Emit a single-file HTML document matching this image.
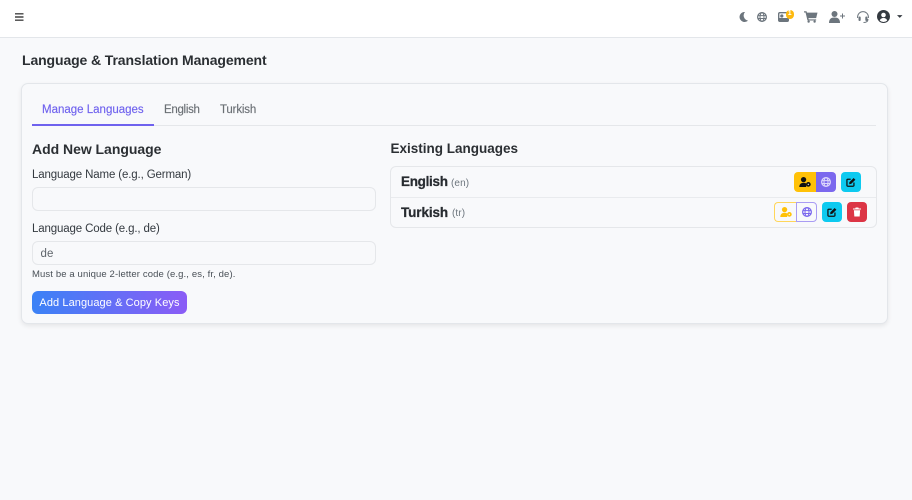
<!DOCTYPE html>
<html lang="en"><head><meta charset="utf-8"><title>Language & Translation Management</title>
<style>
*{box-sizing:border-box}
html,body{margin:0;padding:0;width:912px;height:500px;overflow:hidden;background:#f8f9fb;font-family:"Liberation Sans",sans-serif;color:#212529}
.a{position:absolute;white-space:nowrap}
svg{position:absolute;display:block}
.btn{position:absolute;width:20px;height:20px}
</style></head><body>
<svg width="0" height="0" style="position:absolute"><defs>
<symbol id="globe" viewBox="0 0 16 16"><circle cx="8" cy="8" r="7" fill="none" stroke="currentColor" stroke-width="2"/><ellipse cx="8" cy="8" rx="3.200" ry="7" fill="none" stroke="currentColor" stroke-width="1.600"/><path d="M1 5.700h14M1 10.300h14" stroke="currentColor" stroke-width="1.600"/></symbol>
<symbol id="usercog" viewBox="0 0 16 14"><circle cx="6" cy="3.700" r="3.700" fill="currentColor"/><path d="M0 14c0-4 2.300-5.800 6-5.800 1.500 0 2.700.3 3.700.9V14z" fill="currentColor"/><circle cx="12.700" cy="10.300" r="3.300" fill="currentColor"/><circle cx="12.700" cy="10.300" r="1.100" fill="#fff" opacity=".75"/></symbol>
<symbol id="edit" viewBox="0 0 16 16"><path d="M12.700 8.700V13.500a1.200 1.200 0 0 1-1.200 1.200H2.700a1.200 1.200 0 0 1-1.200-1.200V4.700a1.200 1.200 0 0 1 1.200-1.200H7.500" fill="none" stroke="currentColor" stroke-width="2"/><path d="M5.500 8.200L12.200 1.500l2.800 2.800-6.700 6.700-3.300.5z" fill="currentColor"/></symbol>
</defs></svg>

<div class="a" style="left:0;top:0;width:912px;height:38px;background:#fff;border-bottom:1px solid #e3e6ea"></div>
<svg style="left:15px;top:12.500px" width="8.500" height="8" viewBox="0 0 8.500 8"><path d="M0 .8h8.500M0 4h8.500M0 7.200h8.500" stroke="#444" stroke-width="1.400"/></svg>

<svg style="left:738.500px;top:12px" width="9" height="10" viewBox="0 0 9 10"><path d="M6 0A5 5 0 1 0 9 8.600 5.200 5.200 0 0 1 6 0z" fill="#6c757d"/></svg>
<svg style="left:757px;top:12px;color:#6c757d" width="10" height="10"><use href="#globe"/></svg>
<svg style="left:778px;top:12px" width="11" height="10" viewBox="0 0 11 10"><rect x=".7" y=".7" width="9.600" height="8.600" rx="1" fill="none" stroke="#6c757d" stroke-width="1.400"/><rect x="1" y="6" width="9" height="3" fill="#6c757d"/><circle cx="3.800" cy="4" r="1.600" fill="#6c757d"/></svg>
<div class="a" style="left:785.500px;top:10px;width:8.500px;height:8.500px;border-radius:50%;background:#fdb90e;color:#fff;font-size:7px;line-height:8.500px;font-weight:700;text-align:center">1</div>
<svg style="left:804px;top:11px" width="13.500" height="12" viewBox="0 0 14 12"><path d="M0 0h2.600l.5 1.500H14l-1.400 5.700H4.600l.3 1.200h7.700v1.200H3.600L1.600 1.300H0z" fill="#6c757d"/><circle cx="4.800" cy="10.800" r="1.200" fill="#6c757d"/><circle cx="11" cy="10.800" r="1.200" fill="#6c757d"/></svg>
<svg style="left:829px;top:11px" width="16" height="12" viewBox="0 0 16 12"><circle cx="5.500" cy="3" r="3" fill="#6c757d"/><path d="M0 12c0-4 2-5.500 5.500-5.500S11 8 11 12z" fill="#6c757d"/><path d="M13.500 2.500v5M11 5h5" stroke="#6c757d" stroke-width="1"/></svg>
<svg style="left:857px;top:11px" width="12" height="12" viewBox="0 0 12 12"><path d="M.6 7V6a5.400 5.400 0 0 1 10.800 0V7" fill="none" stroke="#6c757d" stroke-width="1"/><rect x="1.500" y="5.500" width="2.200" height="4.500" rx="1" fill="#6c757d"/><rect x="8.300" y="5.500" width="2.200" height="4.500" rx="1" fill="#6c757d"/><path d="M11 8c0 2.700-1.800 3.500-4.500 3.500" fill="none" stroke="#6c757d" stroke-width="1"/></svg>
<svg style="left:877px;top:9.500px" width="13" height="13" viewBox="0 0 13 13"><circle cx="6.500" cy="6.500" r="6.500" fill="#343a40"/><circle cx="6.500" cy="5" r="2.300" fill="#fff"/><path d="M2.800 10.500c.6-1.800 2-2.500 3.700-2.500s3.100.7 3.700 2.500a5.200 5.200 0 0 1-7.400 0z" fill="#fff"/></svg>
<svg style="left:897px;top:15px" width="5.500" height="3" viewBox="0 0 6 3"><path d="M0 0h6L3 3z" fill="#343a40"/></svg>

<div class="a" style="left:22px;top:52px;font-size:14px;line-height:16px;font-weight:700;letter-spacing:-.11px;color:#2b2f33">Language &amp; Translation Management</div>

<div class="a" style="left:21px;top:83px;width:867px;height:241px;background:#f8f9fb;border:1px solid #e3e6ea;border-radius:7px;box-shadow:0 2px 5px rgba(0,0,0,.08)"></div>

<div class="a" style="left:32px;top:125px;width:844px;height:1px;background:#e5e7ea"></div>
<div class="a" style="left:32px;top:124px;width:122px;height:2px;background:#6f62ee"></div>
<div class="a" style="left:42px;top:103px;font-size:11.500px;line-height:14px;letter-spacing:0;-webkit-text-stroke:.15px #6f62ee;color:#6f62ee">Manage Languages</div>
<div class="a" style="left:164px;top:103px;font-size:11.500px;line-height:14px;letter-spacing:-.3px;-webkit-text-stroke:.15px #6b7075;color:#6b7075">English</div>
<div class="a" style="left:220px;top:103px;font-size:11.500px;line-height:14px;letter-spacing:-.17px;-webkit-text-stroke:.15px #6b7075;color:#6b7075">Turkish</div>

<div class="a" style="left:32px;top:141px;font-size:14px;line-height:16px;font-weight:700;letter-spacing:-.03px;color:#2b2f33">Add New Language</div>
<div class="a" style="left:32px;top:168px;font-size:11.500px;line-height:14px;letter-spacing:-.14px;color:#343a40">Language Name (e.g., German)</div>
<div class="a" style="left:32px;top:187px;width:343.500px;height:24px;border:1px solid #e5e7ea;border-radius:6px;background:#f8f9fb"></div>
<div class="a" style="left:32px;top:222px;font-size:11.500px;line-height:14px;letter-spacing:-.14px;color:#343a40">Language Code (e.g., de)</div>
<div class="a" style="left:32px;top:241px;width:343.500px;height:24px;border:1px solid #e5e7ea;border-radius:6px;background:#f8f9fb"></div>
<div class="a" style="left:40.500px;top:247px;font-size:11.500px;line-height:14px;letter-spacing:.1px;color:#5f656b">de</div>
<div class="a" style="left:32px;top:269px;font-size:9.500px;line-height:11px;letter-spacing:.12px;color:#495057">Must be a unique 2-letter code (e.g., es, fr, de).</div>
<div class="a" style="left:32px;top:291px;width:155px;height:23px;border-radius:6px;background:linear-gradient(90deg,#3b82f6,#8b5cf6);color:#fff;font-size:11px;line-height:24px;text-align:center;letter-spacing:.08px">Add Language &amp; Copy Keys</div>

<div class="a" style="left:390.500px;top:141px;font-size:13.500px;line-height:16px;font-weight:700;letter-spacing:0;color:#2b2f33">Existing Languages</div>
<div class="a" style="left:390px;top:166px;width:487px;height:62px;border:1px solid #e5e7ea;border-radius:6px;background:#f8f9fb"></div>
<div class="a" style="left:391px;top:197px;width:485px;height:1px;background:#e9ebee"></div>
<div class="a" style="left:401px;top:174px;font-size:13.500px;line-height:16px;font-weight:700;letter-spacing:-.3px;-webkit-text-stroke:.25px #272b30;color:#272b30">English</div>
<div class="a" style="left:451px;top:177px;font-size:10px;line-height:14px;letter-spacing:.1px;color:#6c757d">(en)</div>
<div class="a" style="left:401px;top:205px;font-size:13.500px;line-height:16px;font-weight:700;letter-spacing:-.1px;-webkit-text-stroke:.25px #272b30;color:#272b30">Turkish</div>
<div class="a" style="left:452px;top:207px;font-size:10px;line-height:14px;letter-spacing:.1px;color:#6c757d">(tr)</div>

<div class="btn" style="left:794px;top:172px;width:22px;background:#ffc107;border-radius:4px 0 0 4px"></div>
<svg style="left:799px;top:176.500px;color:#111" width="12" height="10"><use href="#usercog"/></svg>
<div class="btn" style="left:816px;top:172px;background:#7b68ee;border-radius:0 4px 4px 0"></div>
<svg style="left:821px;top:177px;color:#dcd6fb" width="10" height="10"><use href="#globe"/></svg>
<div class="btn" style="left:841px;top:172px;background:#0dcaf0;border-radius:4px"></div>
<svg style="left:846px;top:177px;color:#111" width="10" height="10"><use href="#edit"/></svg>

<div class="btn" style="left:774px;top:202px;width:23px;border:1px solid #ffd65a;border-right:0;border-radius:4px 0 0 4px"></div>
<svg style="left:780px;top:207px;color:#ffc107" width="12" height="10"><use href="#usercog"/></svg>
<div class="btn" style="left:796px;top:202px;width:21px;border:1px solid #a99cf3;border-radius:0 4px 4px 0"></div>
<svg style="left:802px;top:207px;color:#7b68ee" width="10" height="10"><use href="#globe"/></svg>
<div class="btn" style="left:822px;top:202px;background:#0dcaf0;border-radius:4px"></div>
<svg style="left:827px;top:207px;color:#111" width="10" height="10"><use href="#edit"/></svg>
<div class="btn" style="left:847px;top:202px;background:#dc3545;border-radius:4px"></div>
<svg style="left:852.500px;top:207px" width="8" height="10" viewBox="0 0 9 10"><path d="M0 1h2.500L3 0h3l.5 1H9v1.200H0zM1 3h7l-.5 7h-6z" fill="#fff"/></svg>
</body></html>
